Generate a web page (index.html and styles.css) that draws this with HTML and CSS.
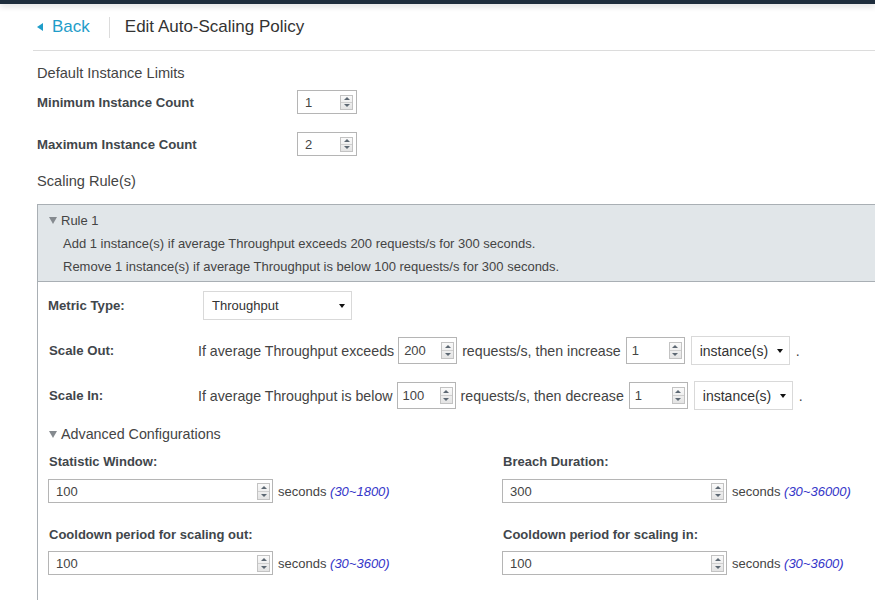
FILE: index.html
```html
<!DOCTYPE html>
<html>
<head>
<meta charset="utf-8">
<title>Edit Auto-Scaling Policy</title>
<link rel="stylesheet" href="styles.css">
</head>
<body>
<div class="topbar"></div>
<div class="header">
  <a class="back"><span class="tri-left"></span>Back</a>
  <span class="sep"></span>
  <h1 class="title">Edit Auto-Scaling Policy</h1>
</div>
<div class="content">
  <div class="section-title">Default Instance Limits</div>
  <div class="limit-row">
    <span class="limit-label">Minimum Instance Count</span>
    <div class="spin spin-sm"><span class="val">1</span><span class="spin-btn"><i class="up"></i><i class="down"></i></span></div>
  </div>
  <div class="limit-row">
    <span class="limit-label">Maximum Instance Count</span>
    <div class="spin spin-sm"><span class="val">2</span><span class="spin-btn"><i class="up"></i><i class="down"></i></span></div>
  </div>
  <div class="section-title section-rules">Scaling Rule(s)</div>

  <div class="panel">
    <div class="panel-head">
      <div class="rule-title"><span class="tri-down"></span>Rule 1</div>
      <div class="rule-line">Add 1 instance(s) if average Throughput exceeds 200 requests/s for 300 seconds.</div>
      <div class="rule-line">Remove 1 instance(s) if average Throughput is below 100 requests/s for 300 seconds.</div>
    </div>
    <div class="panel-body">
      <div class="row metric-row">
        <span class="row-label metric-label">Metric Type:</span>
        <div class="select select-metric"><span>Throughput</span><span class="caret"></span></div>
      </div>
      <div class="row scale-row">
        <span class="row-label scale-label">Scale Out:</span>
        <span class="txt">If average Throughput exceeds</span>
        <div class="spin spin-md"><span class="val">200</span><span class="spin-btn"><i class="up"></i><i class="down"></i></span></div>
        <span class="txt">requests/s, then increase</span>
        <div class="spin spin-md"><span class="val">1</span><span class="spin-btn"><i class="up"></i><i class="down"></i></span></div>
        <div class="select select-unit"><span>instance(s)</span><span class="caret"></span></div>
        <span class="txt dot">.</span>
      </div>
      <div class="row scale-row">
        <span class="row-label scale-label">Scale In:</span>
        <span class="txt">If average Throughput is below</span>
        <div class="spin spin-md"><span class="val">100</span><span class="spin-btn"><i class="up"></i><i class="down"></i></span></div>
        <span class="txt">requests/s, then decrease</span>
        <div class="spin spin-md"><span class="val">1</span><span class="spin-btn"><i class="up"></i><i class="down"></i></span></div>
        <div class="select select-unit"><span>instance(s)</span><span class="caret"></span></div>
        <span class="txt dot">.</span>
      </div>
      <div class="adv-title"><span class="tri-down"></span>Advanced Configurations</div>
      <div class="adv-grid">
        <div class="field">
          <div class="field-label">Statistic Window:</div>
          <div class="field-ctrl">
            <div class="spin spin-lg"><span class="val">100</span><span class="spin-btn"><i class="up"></i><i class="down"></i></span></div>
            <span class="unit">seconds <em>(30~1800)</em></span>
          </div>
        </div>
        <div class="field">
          <div class="field-label">Breach Duration:</div>
          <div class="field-ctrl">
            <div class="spin spin-lg"><span class="val">300</span><span class="spin-btn"><i class="up"></i><i class="down"></i></span></div>
            <span class="unit">seconds <em>(30~36000)</em></span>
          </div>
        </div>
        <div class="field">
          <div class="field-label">Cooldown period for scaling out:</div>
          <div class="field-ctrl">
            <div class="spin spin-lg"><span class="val">100</span><span class="spin-btn"><i class="up"></i><i class="down"></i></span></div>
            <span class="unit">seconds <em>(30~3600)</em></span>
          </div>
        </div>
        <div class="field">
          <div class="field-label">Cooldown period for scaling in:</div>
          <div class="field-ctrl">
            <div class="spin spin-lg"><span class="val">100</span><span class="spin-btn"><i class="up"></i><i class="down"></i></span></div>
            <span class="unit">seconds <em>(30~3600)</em></span>
          </div>
        </div>
      </div>
    </div>
  </div>
</div>
</body>
</html>
```
FILE: styles.css
```css
* { box-sizing: border-box; }
html, body { margin: 0; padding: 0; }
body {
  background: #fff;
  font-family: "Liberation Sans", Arial, sans-serif;
  color: #444;
  overflow: hidden;
  height: 600px;
}
.topbar {
  height: 4px;
  background: #1e2d3c;
  box-shadow: 0 2px 6px rgba(0,0,0,0.18);
  position: relative;
  z-index: 1;
}
.header {
  display: flex;
  align-items: center;
  height: 47px;
  margin-left: 33px;
  padding-left: 4px;
  border-bottom: 1px solid #dcdcdc;
}
.back {
  display: flex;
  align-items: center;
  color: #1f9dc9;
  font-size: 17px;
}
.tri-left {
  width: 0; height: 0;
  border-top: 4px solid transparent;
  border-bottom: 4px solid transparent;
  border-right: 6px solid #1f9dc9;
  margin-right: 9px;
}
.sep {
  width: 1px;
  height: 21px;
  background: #dcdcdc;
  margin: 0 15px 0 19px;
}
.title {
  margin: 0;
  font-size: 17px;
  font-weight: normal;
  color: #333;
}
.content { padding-left: 37px; }
.section-title {
  font-size: 14.6px;
  line-height: 18px;
  margin-top: 13px;
  color: #444;
}
.section-rules { margin-top: 16px; }
.limit-row {
  display: flex;
  align-items: center;
  height: 24px;
  margin-top: 8px;
}
.limit-row + .limit-row { margin-top: 18px; }
.limit-label {
  width: 260px;
  font-size: 13.2px;
  font-weight: bold;
  color: #41464b;
}
.spin {
  display: flex;
  align-items: center;
  justify-content: space-between;
  border: 1px solid #b5b5b5;
  background: #fff;
  font-size: 13px;
  color: #444;
}
.spin-sm { width: 60px; height: 24px; padding: 0 3px 0 7px; }
.spin-md { width: 59px; height: 27px; padding: 0 2px 0 5px; }
.spin-lg { width: 225px; height: 24px; padding: 0 2px 0 7px; }
.spin-btn {
  display: flex;
  flex-direction: column;
  width: 13px;
  height: 15px;
  border: 1px solid #c3c3c3;
  background: linear-gradient(#fafafa, #e4e4e4);
}
.spin-md .spin-btn { height: 17px; }
.spin-lg .spin-btn { height: 17px; }
.spin-btn i {
  flex: 1;
  display: flex;
  align-items: center;
  justify-content: center;
}
.spin-btn i + i { border-top: 1px solid #cfcfcf; }
.spin-btn i::after {
  content: "";
  width: 0; height: 0;
  border-left: 3px solid transparent;
  border-right: 3px solid transparent;
}
.spin-btn .up::after { border-bottom: 3px solid #5d6873; }
.spin-btn .down::after { border-top: 3px solid #5d6873; }

.panel {
  margin-top: 14px;
  border: 1px solid #a9afb4;
  border-right: none;
  height: 420px;
}
.panel-head {
  background: #e1e6e9;
  border-bottom: 1px solid #a9afb4;
  padding: 4px 0 3px;
  font-size: 13px;
  color: #444;
}
.rule-title {
  display: flex;
  align-items: center;
  line-height: 23px;
  padding-left: 11px;
}
.tri-down {
  width: 0; height: 0;
  border-left: 4px solid transparent;
  border-right: 4px solid transparent;
  border-top: 7px solid #858a8f;
  margin-right: 4px;
}
.rule-line { line-height: 23px; padding-left: 25px; }
.panel-body { padding: 9px 0 0 10px; }
.row {
  display: flex;
  align-items: center;
}
.metric-row { height: 29px; }
.scale-row { height: 29px; margin-top: 16px; }
.row-label {
  font-size: 13.2px;
  font-weight: bold;
  color: #41464b;
}
.metric-label { width: 155px; }
.scale-label { width: 150px; padding-left: 1px; }
.txt { font-size: 14.2px; color: #444; margin-right: 4px; }
.scale-row .spin { margin-right: 5px; }
.scale-row .spin + .txt { margin-right: 5px; }
.scale-row .spin + .select { margin-left: 1px; margin-right: 6px; }
.select {
  display: flex;
  align-items: center;
  justify-content: space-between;
  height: 29px;
  border: 1px solid #d9d9d9;
  background: #fff;
  font-size: 13px;
  color: #333;
  padding: 0 6px 0 8px;
}
.select-metric { width: 149px; }
.select-unit { width: 99px; font-size: 14px; }
.caret {
  width: 0; height: 0;
  border-left: 3.5px solid transparent;
  border-right: 3.5px solid transparent;
  border-top: 4px solid #111;
}
.adv-title {
  display: flex;
  align-items: center;
  margin-top: 15px;
  font-size: 14.3px;
  line-height: 18px;
  color: #444;
  padding-left: 1px;
}
.adv-grid {
  display: grid;
  grid-template-columns: 454px 1fr;
  row-gap: 24px;
  margin-top: 11px;
}
.field-label {
  font-size: 13px;
  font-weight: bold;
  line-height: 16px;
  color: #41464b;
  padding-left: 1px;
}
.field-ctrl {
  display: flex;
  align-items: center;
  margin-top: 9px;
}
.unit {
  margin-left: 5px;
  font-size: 13px;
  color: #444;
}
.unit em { color: #3434c8; }
.adv-grid .field:nth-child(n+3) .field-ctrl { margin-top: 8px; }
```
